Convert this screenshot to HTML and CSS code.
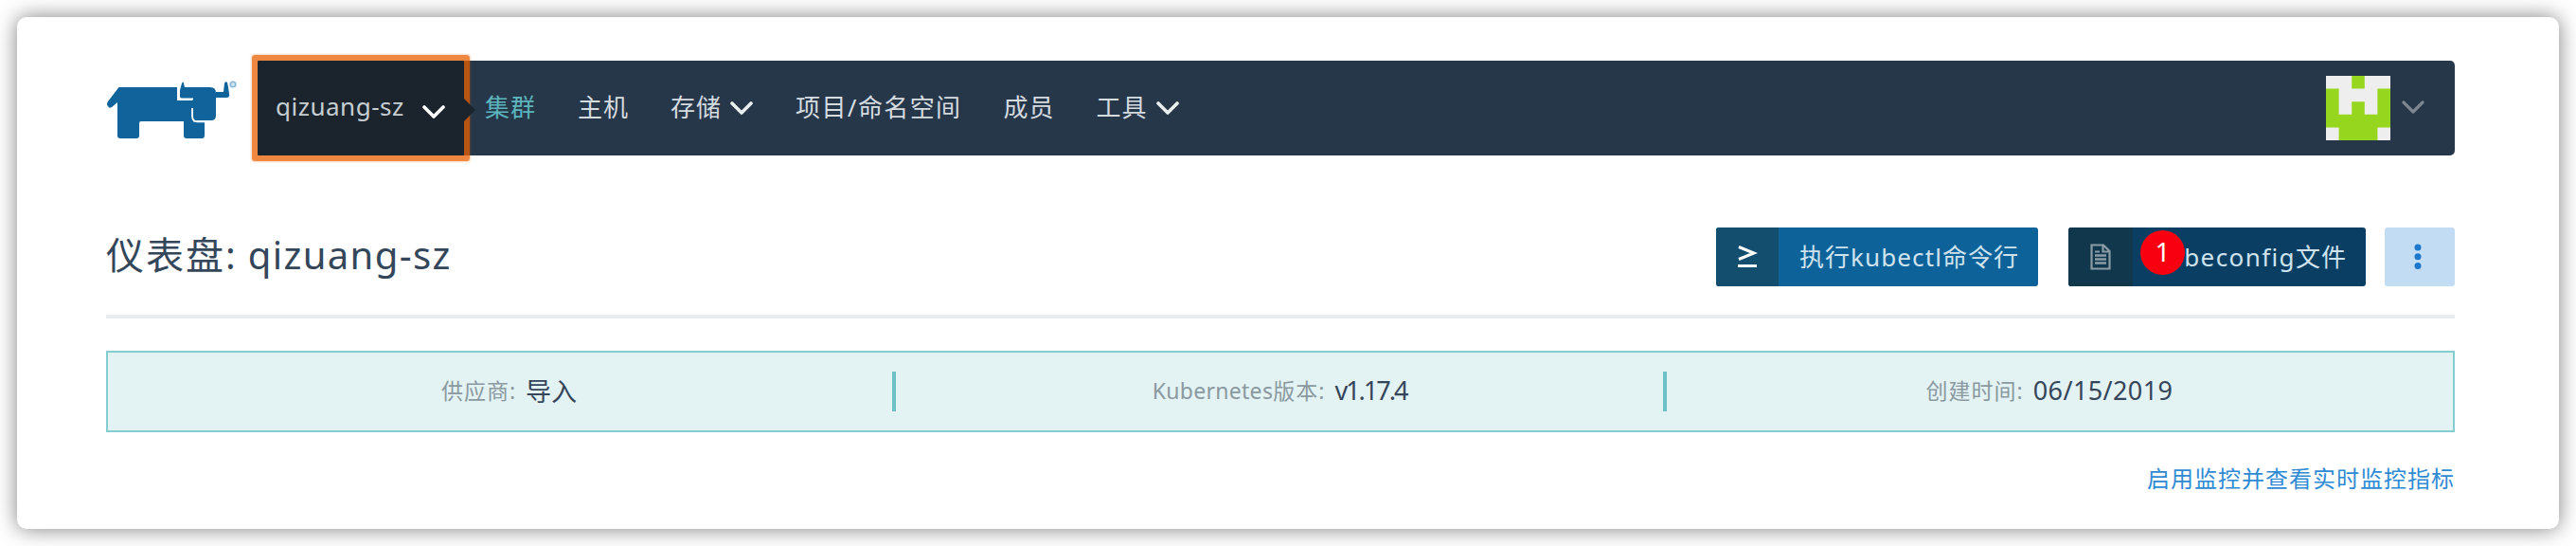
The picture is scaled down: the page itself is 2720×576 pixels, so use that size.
FILE: index.html
```html
<!DOCTYPE html>
<html lang="zh-CN">
<head>
<meta charset="utf-8">
<title>仪表盘: qizuang-sz</title>
<link rel="stylesheet" href="styles.css">
</head>
<body>
<div class="window">
  <header class="header">
    <svg class="logo" viewBox="0 0 139 64">
      <g fill="#11639b">
        <path d="M13 7H74V21H91V43.500H103V58Q103 61 100 61H84Q81 61 81 58V43H36Q34 43 34 45V58Q34 61 31 61H14Q11 61 11 58V23L5 28Q2 30 1 27Q-1 25 1 22L11 9Q12 7 13 7Z"/>
        <path d="M77 16V10L79 3Q80 0 81 3L82 7H109Q115 7 115 13V37Q115 42 110 42H90V20H80Q77 19 77 16Z"/>
        <path d="M115 12H123L124 3Q125 0 127 2L128 7L129 14Q130 18 126 18H115Z"/>
      </g>
      <path d="M75 5V16Q75.500 19.500 79 19.500H91M90 29V38Q90.500 43 95 43.300H104" fill="none" stroke="#fff" stroke-width="1.800"/>
      <circle cx="133" cy="4" r="2.800" fill="#cfe2ee" stroke="#86b8d6" stroke-width="1.600"/>
    </svg>
    <nav class="nav">
      <div class="cluster">
        <span class="cluster-name">qizuang-sz</span>
        <svg class="chev" viewBox="0 0 24 15"><path d="M2 2L12 12L22 2"/></svg>
      </div>
      <ul class="menu">
        <li class="active">集群</li>
        <li>主机</li>
        <li>存储<svg class="chev" viewBox="0 0 24 15"><path d="M2 2L12 12L22 2"/></svg></li>
        <li class="projects">项目/命名空间</li>
        <li>成员</li>
        <li>工具<svg class="chev" viewBox="0 0 24 15"><path d="M2 2L12 12L22 2"/></svg></li>
      </ul>
      <div class="user">
        <svg class="avatar" viewBox="0 0 5 5"><path fill="#eee" d="M0 0H5V5H0Z"/><path fill="#96d61e" d="M2 0H3V1H2ZM0 1H1V3H2V2H3V3H4V1H5V4H4V5H1V4H0ZM1 3H4V4H1Z"/></svg>
        <svg class="chev muted" viewBox="0 0 24 15"><path d="M2 2L12 12L22 2"/></svg>
      </div>
    </nav>
  </header>
  <section class="title-row">
    <h1>仪表盘:<span class="title-name">qizuang-sz</span></h1>
    <div class="actions">
      <button class="btn kubectl">
        <span class="btn-icon"><svg width="22" height="26" viewBox="0 0 22 26"><path d="M2 2.500L18 9L2 15.500M1 22.500H21" fill="none" stroke="#fff" stroke-width="3"/></svg></span>
        <span class="btn-text">执行<span class="lat">kubectl</span>命令行</span>
      </button>
      <button class="btn config">
        <span class="btn-icon"><svg width="22" height="28" viewBox="0 0 22 28"><path d="M1.500 1.500H14L20.500 8V26.500H1.500ZM13.500 1.500V8.500H20.500M5 8.500H10" fill="none" stroke="#8b9ca7" stroke-width="2.200"/><path d="M5 12.500H17M5 16.500H17M5 20.500H17" stroke="#8b9ca7" stroke-width="2.400"/></svg></span>
        <span class="btn-text"><span class="lat">beconfig</span>文件</span>
        <span class="badge">1</span>
      </button>
      <button class="btn more"><svg width="8" height="28" viewBox="0 0 8 28" fill="#1c78cb"><circle cx="4" cy="4" r="3.500"/><circle cx="4" cy="13.700" r="3.500"/><circle cx="4" cy="23.400" r="3.500"/></svg></button>
    </div>
  </section>
  <section class="banner">
    <div class="cell provider"><label>供应商:</label><b>导入</b></div>
    <div class="rule"></div>
    <div class="cell version"><label><span class="lat">Kubernetes</span>版本:</label><b>v1.17.4</b></div>
    <div class="rule"></div>
    <div class="cell created"><label>创建时间:</label><b>06/15/2019</b></div>
  </section>
  <div class="monitor"><a>启用监控并查看实时监控指标</a></div>
</div>
</body>
</html>
```
FILE: styles.css
```css
* { box-sizing: border-box; }
body {
  margin: 0;
  padding: 18px;
  height: 576px;
  overflow: hidden;
  background: #fff;
  font-family: "Noto Sans", "Noto Sans CJK SC", sans-serif;
  font-weight: 400;
  font-size: 26px;
  white-space: nowrap;
}
.window {
  height: 540px;
  padding: 46px 110px 0 94px;
  border-radius: 10px;
  background: #fff;
  box-shadow: 0 0 22px rgba(0, 0, 0, .5);
}
.header { display: flex; height: 100px; }
.logo { width: 139px; height: 64px; margin: 21px 20px 0 1px; flex: none; }
.nav {
  flex: 1;
  display: flex;
  align-items: center;
  background: #27374a;
  border-radius: 0 5px 5px 0;
  color: #d5dce0;
}
.cluster {
  position: relative;
  width: 218px;
  height: 100px;
  padding-left: 19px;
  display: flex;
  align-items: center;
  background: #1b242d;
  box-shadow: 0 0 0 6px rgba(232, 95, 0, .67), 0 0 2px 7px rgba(232, 95, 0, .25);
  border-radius: 1px;
}
.cluster::after {
  content: "";
  position: absolute;
  left: 218px;
  top: 40px;
  border: 12px solid transparent;
  border-left-color: #1b242d;
  border-right: 0;
}
.cluster-name { width: 155px; color: #c6ced2; letter-spacing: .500px; padding-bottom: 4px; }
.chev { width: 24px; height: 15px; fill: none; stroke: #e9eef0; stroke-width: 3.6; stroke-linecap: round; stroke-linejoin: round; }
.cluster .chev { margin-top: 8px; stroke: #fff; }
.muted { stroke: #7d8791; stroke-width: 3.2; margin-bottom: 2px; }
.menu { display: flex; list-style: none; margin: 0; padding: 0 0 4px 22px; gap: 44px; letter-spacing: 1px; }
.menu li { display: flex; align-items: center; }
.menu .chev { margin-left: 9px; margin-right: 1px; margin-top: 5px; }
.projects { letter-spacing: 1.400px; }
.menu .active { color: #5cb5bd; }
.user { margin-left: auto; display: flex; align-items: center; gap: 12px; padding-right: 32px; }
.avatar { width: 68px; height: 68px; }
.title-row {
  display: flex;
  justify-content: space-between;
  align-items: flex-start;
  height: 172px;
  padding-top: 75px;
  border-bottom: 4px solid #e8eced;
}
h1 { margin: 0; font-size: 40px; line-height: 60px; font-weight: 400; color: #34465a; letter-spacing: 2px; }
.title-name { margin-left: 11px; letter-spacing: 1.400px; }
.actions { display: flex; padding-top: 1px; }
.btn {
  position: relative;
  height: 62px;
  padding: 0;
  border: 0;
  border-radius: 3px;
  overflow: hidden;
  display: flex;
  align-items: center;
  font: inherit;
  color: #cfe3ee;
}
.btn-icon { height: 62px; display: flex; align-items: center; justify-content: center; }
.btn-text { flex: 1; text-align: right; padding: 0 20px 2px 0; letter-spacing: 1px; }
.kubectl { width: 340px; background: #0d6299; margin-right: 32px; }
.kubectl .btn-icon { width: 66px; background: #134e6e; }
.kubectl .lat { letter-spacing: 1.100px; }
.config { width: 314px; background: #0a3f63; margin-right: 20px; }
.config .btn-icon { width: 68px; background: #11374c; }
.config .lat { letter-spacing: 1.400px; }
.more { width: 74px; background: #c1dcf3; justify-content: center; padding-right: 4px; }
.badge {
  position: absolute;
  left: 76px;
  top: 3px;
  width: 47px;
  height: 47px;
  border-radius: 50%;
  background: #f80010;
  color: #fff;
  font-size: 28px;
  line-height: 45px;
  text-align: center;
}
.banner {
  display: flex;
  align-items: center;
  height: 86px;
  margin-top: 34px;
  background: #e3f2f3;
  border: 2px solid #84cdd0;
}
.cell { display: flex; align-items: center; justify-content: center; color: #35455a; padding-bottom: 4px; }
.cell label { font-size: 23px; letter-spacing: 1px; color: #8a999f; margin-right: 10px; }
.cell .lat { letter-spacing: .300px; }
.cell b { font-weight: 400; font-size: 27px; }
.provider { width: 828px; padding-left: 19px; }
.version { width: 810px; }
.version b { letter-spacing: -2px; }
.created { flex: 1; padding-right: 22px; }
.created b { letter-spacing: .4px; }
.rule { width: 4px; height: 42px; background: #6cc1c6; }
.monitor { margin-top: 31px; text-align: right; font-size: 24px; line-height: 36px; letter-spacing: 1px; color: #2f8ad4; }
```
